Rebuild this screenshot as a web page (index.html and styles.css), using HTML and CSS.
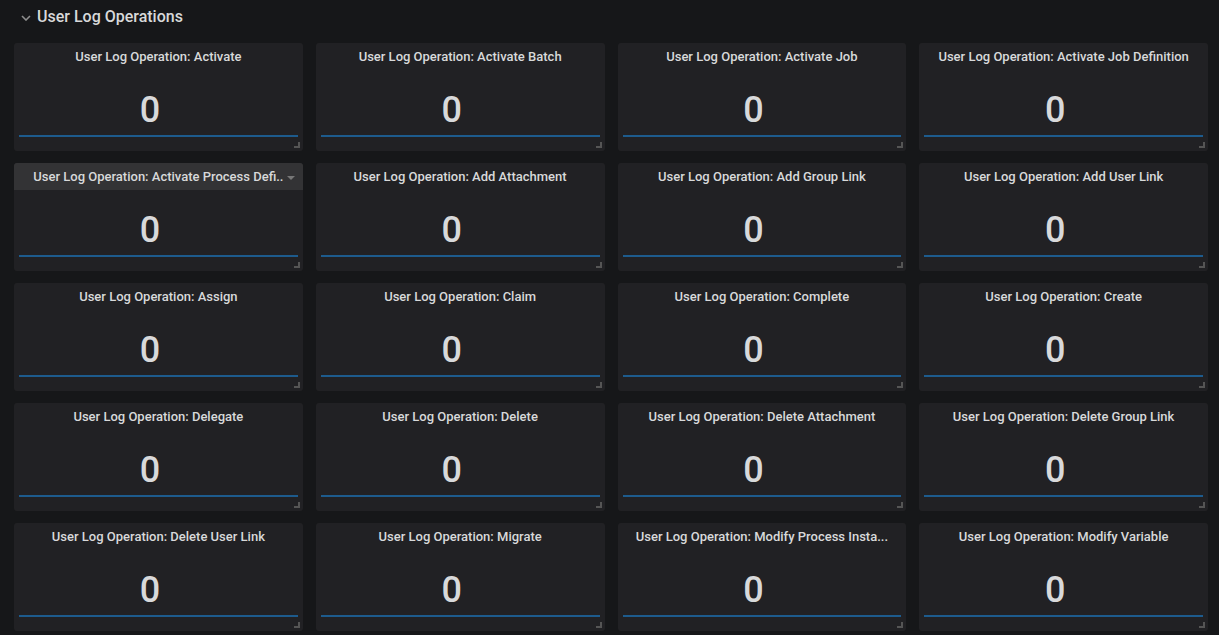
FILE: index.html
```html
<!DOCTYPE html>
<html>
<head>
<meta charset="utf-8">
<link rel="stylesheet" href="styles.css">
</head>
<body>
<div class="row-header">
  <svg class="chev" width="10" height="6" viewBox="0 0 10 6"><path d="M1 1 L5 5 L9 1" fill="none" stroke="#8e8e8e" stroke-width="1.6"/></svg>
  <span class="row-title">User Log Operations</span>
</div>
<div class="grid">
  <div class="panel"><div class="ptitle">User Log Operation: Activate</div><div class="value">0</div><div class="spark"></div><div class="resize"></div></div>
  <div class="panel"><div class="ptitle">User Log Operation: Activate Batch</div><div class="value">0</div><div class="spark"></div><div class="resize"></div></div>
  <div class="panel"><div class="ptitle">User Log Operation: Activate Job</div><div class="value">0</div><div class="spark"></div><div class="resize"></div></div>
  <div class="panel"><div class="ptitle">User Log Operation: Activate Job Definition</div><div class="value">0</div><div class="spark"></div><div class="resize"></div></div>

  <div class="panel"><div class="ptitle hover"><span class="ttext">User Log Operation: Activate Process Defi..</span><span class="caret"></span></div><div class="value">0</div><div class="spark"></div><div class="resize"></div></div>
  <div class="panel"><div class="ptitle">User Log Operation: Add Attachment</div><div class="value">0</div><div class="spark"></div><div class="resize"></div></div>
  <div class="panel"><div class="ptitle">User Log Operation: Add Group Link</div><div class="value">0</div><div class="spark"></div><div class="resize"></div></div>
  <div class="panel"><div class="ptitle">User Log Operation: Add User Link</div><div class="value">0</div><div class="spark"></div><div class="resize"></div></div>

  <div class="panel"><div class="ptitle">User Log Operation: Assign</div><div class="value">0</div><div class="spark"></div><div class="resize"></div></div>
  <div class="panel"><div class="ptitle">User Log Operation: Claim</div><div class="value">0</div><div class="spark"></div><div class="resize"></div></div>
  <div class="panel"><div class="ptitle">User Log Operation: Complete</div><div class="value">0</div><div class="spark"></div><div class="resize"></div></div>
  <div class="panel"><div class="ptitle">User Log Operation: Create</div><div class="value">0</div><div class="spark"></div><div class="resize"></div></div>

  <div class="panel"><div class="ptitle">User Log Operation: Delegate</div><div class="value">0</div><div class="spark"></div><div class="resize"></div></div>
  <div class="panel"><div class="ptitle">User Log Operation: Delete</div><div class="value">0</div><div class="spark"></div><div class="resize"></div></div>
  <div class="panel"><div class="ptitle">User Log Operation: Delete Attachment</div><div class="value">0</div><div class="spark"></div><div class="resize"></div></div>
  <div class="panel"><div class="ptitle">User Log Operation: Delete Group Link</div><div class="value">0</div><div class="spark"></div><div class="resize"></div></div>

  <div class="panel"><div class="ptitle">User Log Operation: Delete User Link</div><div class="value">0</div><div class="spark"></div><div class="resize"></div></div>
  <div class="panel"><div class="ptitle">User Log Operation: Migrate</div><div class="value">0</div><div class="spark"></div><div class="resize"></div></div>
  <div class="panel"><div class="ptitle">User Log Operation: Modify Process Insta...</div><div class="value">0</div><div class="spark"></div><div class="resize"></div></div>
  <div class="panel"><div class="ptitle">User Log Operation: Modify Variable</div><div class="value">0</div><div class="spark"></div><div class="resize"></div></div>
</div>
</body>
</html>
```
FILE: styles.css
```css
html, body {
  margin: 0;
  padding: 0;
  background: #161719;
  font-family: Roboto, "Noto Sans", sans-serif;
  color: #d8d9da;
  overflow: hidden;
}
.row-header {
  height: 33px;
  display: flex;
  align-items: center;
  padding-left: 21px;
  box-sizing: border-box;
  padding-bottom: 1px;
}
.chev {
  margin-right: 6px;
  margin-top: 4px;
}
.row-title {
  font-size: 16px;
  font-weight: 500;
  color: #d8d9da;
}
.grid {
  display: grid;
  grid-template-columns: repeat(4, 1fr);
  grid-auto-rows: 108px;
  column-gap: 13px;
  row-gap: 12px;
  padding: 10px 11px 0 14px;
}
.panel {
  position: relative;
  background: #212124;
  border-radius: 3px;
  display: flex;
  flex-direction: column;
  padding: 0 5px;
}
.ptitle {
  height: 27px;
  margin: 0 -5px;
  display: flex;
  align-items: center;
  justify-content: center;
  font-size: 13px;
  font-weight: 500;
  color: #d8d9da;
  white-space: nowrap;
  border-radius: 3px 3px 0 0;
}
.ptitle.hover {
  background: #333335;
  position: relative;
}
.caret {
  position: absolute;
  right: 8px;
  top: 13px;
  width: 0;
  height: 0;
  border-left: 4px solid transparent;
  border-right: 4px solid transparent;
  border-top: 4px solid #777;
}
.value {
  height: 55px;
  display: flex;
  align-items: center;
  justify-content: center;
  padding-right: 17px;
  padding-top: 25px;
  box-sizing: border-box;
  font-size: 36px;
  font-weight: 500;
  line-height: 30px;
  color: #d8d9da;
}
.spark {
  margin-top: 10px;
  height: 2px;
  background: #1d5b8d;
}
.resize {
  position: absolute;
  right: 3px;
  bottom: 3px;
  width: 4px;
  height: 4px;
  border-right: 2px solid #555;
  border-bottom: 2px solid #555;
}
```
